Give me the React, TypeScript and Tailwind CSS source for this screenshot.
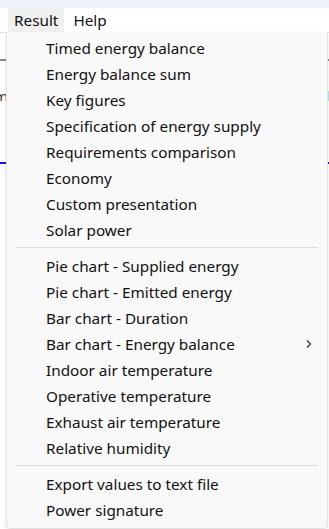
import React from 'react';

const groups: string[][] = [
  [
    'Timed energy balance',
    'Energy balance sum',
    'Key figures',
    'Specification of energy supply',
    'Requirements comparison',
    'Economy',
    'Custom presentation',
    'Solar power',
  ],
  [
    'Pie chart - Supplied energy',
    'Pie chart - Emitted energy',
    'Bar chart - Duration',
    'Bar chart - Energy balance',
    'Indoor air temperature',
    'Operative temperature',
    'Exhaust air temperature',
    'Relative humidity',
  ],
  ['Export values to text file', 'Power signature'],
];

const hasSubmenu = 'Bar chart - Energy balance';

function MenuItem({ label }: { label: string }) {
  return (
    <div className="flex h-[26px] items-center justify-between pl-[39px] pr-[14px]">
      <span>{label}</span>
      {label === hasSubmenu && (
        <svg width="8" height="10" viewBox="0 0 8 10" className="text-[#333]">
          <path d="M2 1.5 L5.5 5 L2 8.5" fill="none" stroke="currentColor" strokeWidth="1.3" />
        </svg>
      )}
    </div>
  );
}

export default function App() {
  return (
    <div
      className="relative h-[529px] w-[329px] overflow-hidden bg-white text-[15.3px] text-[#111]"
      style={{ fontFamily: '"Noto Sans", "Open Sans", sans-serif' }}
    >
      <div className="h-[8px] bg-[#eef2f9]" />
      <div className="flex h-[24px] items-center pl-[8px]">
        <span className="flex h-full items-center bg-[#f0f0f0] px-[6px]">Result</span>
        <span className="pl-[9px]">Help</span>
      </div>
      <div className="h-[1px] bg-[#e3e3e3]" />

      {/* window content behind the menu */}
      <div className="mt-[26px] h-[2px] bg-[#8a8a8a]" />
      <div className="mt-[30px] flex h-[10px] justify-between leading-[10px]">
        <span className="w-[6px] overflow-hidden text-[#444]">
          <span className="-ml-[6px] inline-block">m</span>
        </span>
        <span className="h-[10px] w-[2px] bg-[#9ff0f0]" />
      </div>
      <div className="mt-[61px] h-[2px] bg-[#1414e0]" />

      {/* dropdown */}
      <div className="absolute left-[6px] top-[32px] w-[322px] rounded-b-[5px] border border-t-0 border-[#e2e2e2] bg-[#f9f9f9] pb-[5px] pt-[3px] shadow-[0_3px_6px_rgba(0,0,0,0.08)]">
        {groups.map((g, i) => (
          <div key={i}>
            {i > 0 && <div className="mx-[9px] mb-[5px] mt-[4px] h-[1px] bg-[#dcdcdc]" />}
            {g.map((label) => (
              <MenuItem key={label} label={label} />
            ))}
          </div>
        ))}
      </div>
    </div>
  );
}
